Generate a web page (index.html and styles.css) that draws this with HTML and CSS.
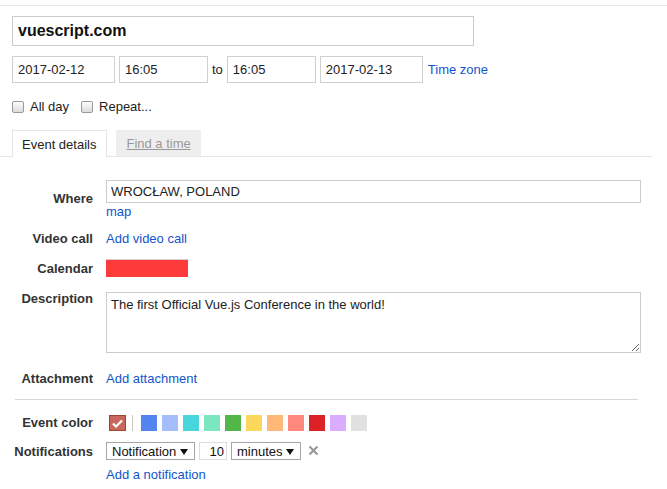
FILE: index.html
```html
<!DOCTYPE html>
<html>
<head>
<meta charset="utf-8">
<link rel="stylesheet" href="styles.css">
</head>
<body>
<div class="page">
  <div class="head">
    <input class="title" value="vuescript.com">
    <div class="dates">
      <input class="field date" value="2017-02-12">
      <input class="field time" value="16:05">
      <span class="to">to</span>
      <input class="field time" value="16:05">
      <input class="field date" value="2017-02-13">
      <a class="link tz">Time zone</a>
    </div>
    <div class="opts">
      <label class="opt"><span class="cb"></span>All day</label>
      <label class="opt"><span class="cb"></span>Repeat...</label>
    </div>
  </div>
  <div class="tabs">
    <div class="tab active">Event details</div>
    <div class="tab inactive"><span class="u">Find a time</span></div>
  </div>
  <div class="form">
    <div class="row where">
      <div class="lbl">Where</div>
      <div class="val">
        <input class="field loc" value="WROCŁAW, POLAND">
        <a class="link line">map</a>
      </div>
    </div>
    <div class="row video">
      <div class="lbl">Video call</div>
      <div class="val"><a class="link line">Add video call</a></div>
    </div>
    <div class="row cal">
      <div class="lbl">Calendar</div>
      <div class="val"><div class="redact"></div></div>
    </div>
    <div class="row desc">
      <div class="lbl">Description</div>
      <div class="val"><textarea class="area">The first Official Vue.js Conference in the world!</textarea></div>
    </div>
    <div class="row attach">
      <div class="lbl">Attachment</div>
      <div class="val"><a class="link line">Add attachment</a></div>
    </div>
    <div class="sep"></div>
    <div class="row color">
      <div class="lbl">Event color</div>
      <div class="val swatches">
        <span class="sel"><svg width="11" height="9" viewBox="0 0 11 9"><path d="M1 4.5 L4 7.5 L10 1.5" fill="none" stroke="#fff" stroke-width="2.2"/></svg></span>
        <span class="vsep"></span>
        <span class="sw" style="background:#5484ed"></span>
        <span class="sw" style="background:#a4bdfc"></span>
        <span class="sw" style="background:#46d6db"></span>
        <span class="sw" style="background:#7ae7bf"></span>
        <span class="sw" style="background:#51b749"></span>
        <span class="sw" style="background:#fbd75b"></span>
        <span class="sw" style="background:#ffb878"></span>
        <span class="sw" style="background:#ff887c"></span>
        <span class="sw" style="background:#dc2127"></span>
        <span class="sw" style="background:#dbadff"></span>
        <span class="sw" style="background:#e1e1e1"></span>
      </div>
    </div>
    <div class="row notif">
      <div class="lbl">Notifications</div>
      <div class="val controls">
        <div class="sel-box kind">Notification<svg class="tri" width="8" height="6" viewBox="0 0 8 6"><path d="M0 0 H8 L4 6 Z" fill="#111"/></svg></div>
        <div class="num">10</div>
        <div class="sel-box unit">minutes<svg class="tri" width="8" height="6" viewBox="0 0 8 6"><path d="M0 0 H8 L4 6 Z" fill="#111"/></svg></div>
        <svg class="x" width="11" height="11" viewBox="0 0 11 11"><path d="M1.5 1.5 L9.5 9.5 M9.5 1.5 L1.5 9.5" stroke="#999" stroke-width="2.2"/></svg>
      </div>
    </div>
    <div class="row addn">
      <div class="lbl"></div>
      <div class="val"><a class="link line">Add a notification</a></div>
    </div>
  </div>
</div>
</body>
</html>
```

FILE: styles.css
```css
* { box-sizing: border-box; }
html, body { margin: 0; padding: 0; background: #fff; }
body {
  font-family: "Liberation Sans", Arial, sans-serif;
  font-size: 13px;
  color: #222;
  width: 667px;
  height: 489px;
  overflow: hidden;
}
.page {
  margin-top: 5px;
  border-top: 1px solid #e8e8e8;
}
.head { padding-left: 12px; padding-top: 10px; }
input, textarea {
  font-family: "Liberation Sans", Arial, sans-serif;
  color: #222;
  margin: 0;
  outline: none;
}
.title {
  display: block;
  width: 462px;
  height: 30px;
  border: 1px solid #ccc;
  padding: 0 5px;
  font-size: 16px;
  font-weight: bold;
  color: #111;
}
.dates {
  display: flex;
  align-items: center;
  gap: 4px;
  margin-top: 10px;
  height: 27px;
}
.field {
  height: 27px;
  border: 1px solid #d0d0d0;
  padding: 0 5px;
  font-size: 13px;
}
.date { width: 103px; }
.time { width: 89px; }
.to { color: #222; }
.link { color: #1155cc; text-decoration: none; cursor: pointer; }
.tz { margin-left: 1px; }
.opts {
  display: flex;
  margin-top: 17px;
  height: 13px;
  align-items: center;
}
.opt {
  display: flex;
  align-items: center;
  margin-right: 12px;
  line-height: 13px;
}
.cb {
  width: 12px;
  height: 12px;
  border: 1px solid #9a9a9a;
  border-radius: 2px;
  background: linear-gradient(#fdfdfd, #dcdcdc);
  margin-right: 6px;
  margin-top: 1px;
}
.tabs {
  display: flex;
  gap: 9px;
  margin-top: 17px;
  padding-left: 12px;
  width: 652px;
  border-bottom: 1px solid #e5e5e5;
  height: 27px;
}
.tab {
  height: 26px;
  line-height: 26px;
  padding: 0 10px;
}
.tab.active {
  border: 1px solid #e5e5e5;
  border-bottom: none;
  background: #fff;
  height: 27px;
  padding: 1px 10px 0 9px;
  color: #222;
}
.tab.inactive {
  background: #eee;
  color: #999;
  padding-top: 1px;
}
.u { text-decoration: underline; }
.form { padding-top: 23px; }
.row {
  display: flex;
  align-items: flex-start;
}
.lbl {
  width: 93px;
  margin-right: 13px;
  text-align: right;
  font-weight: bold;
  color: #333;
  line-height: 16px;
  padding-top: 1px;
  flex: none;
}
.val { display: flex; flex-direction: column; align-items: flex-start; }
.line { line-height: 16px; display: block; padding-top: 1px; }
.where .lbl { padding-top: 11px; }
.loc { width: 535px; height: 23px; padding: 0 4px; border-color: #ccc; }
.video { margin-top: 10px; }
.cal { margin-top: 12px; }
.cal .lbl { line-height: 18px; }
.redact { width: 82px; height: 18px; background: #fd3b3b; border-top: 1px solid #d9c9c9; }
.desc { margin-top: 12px; }
.area {
  width: 535px;
  height: 61px;
  margin-top: 2px;
  border: 1px solid #ccc;
  padding: 4px 4px;
  font-size: 13px;
  resize: both;
  display: block;
}
.attach { margin-top: 17px; }
.sep {
  margin: 12px 0 0 15px;
  width: 623px;
  height: 1px;
  background: #d6d6d6;
}
.color { margin-top: 14px; }
.swatches { flex-direction: row; align-items: center; margin-top: 1px; margin-left: 3px; }
.sel {
  width: 17px;
  height: 16px;
  background: #c9675c;
  border: 1px solid #9e4532;
  display: flex;
  align-items: center;
  justify-content: center;
}
.vsep {
  width: 1px;
  height: 16px;
  background: #c8c8c8;
  margin: 0 8px 0 6px;
}
.sw {
  width: 16px;
  height: 16px;
  margin-right: 5px;
}
.notif { margin-top: 11px; }
.notif .lbl { line-height: 18px; }
.controls { flex-direction: row; align-items: center; gap: 4px; }
.sel-box {
  height: 18px;
  border: 1px solid #a6a6a6;
  display: flex;
  align-items: center;
  justify-content: space-between;
  padding: 1px 6px 0 5px;
  line-height: 16px;
  color: #111;
}
.kind { width: 89px; }
.unit { width: 70px; }
.num {
  width: 28px;
  height: 18px;
  border: 1px solid #ddd;
  text-align: right;
  padding: 1px 2px 0 0;
  line-height: 16px;
  color: #111;
}
.x { margin-left: 3px; margin-top: -2px; }
.addn { margin-top: 5px; }
```
